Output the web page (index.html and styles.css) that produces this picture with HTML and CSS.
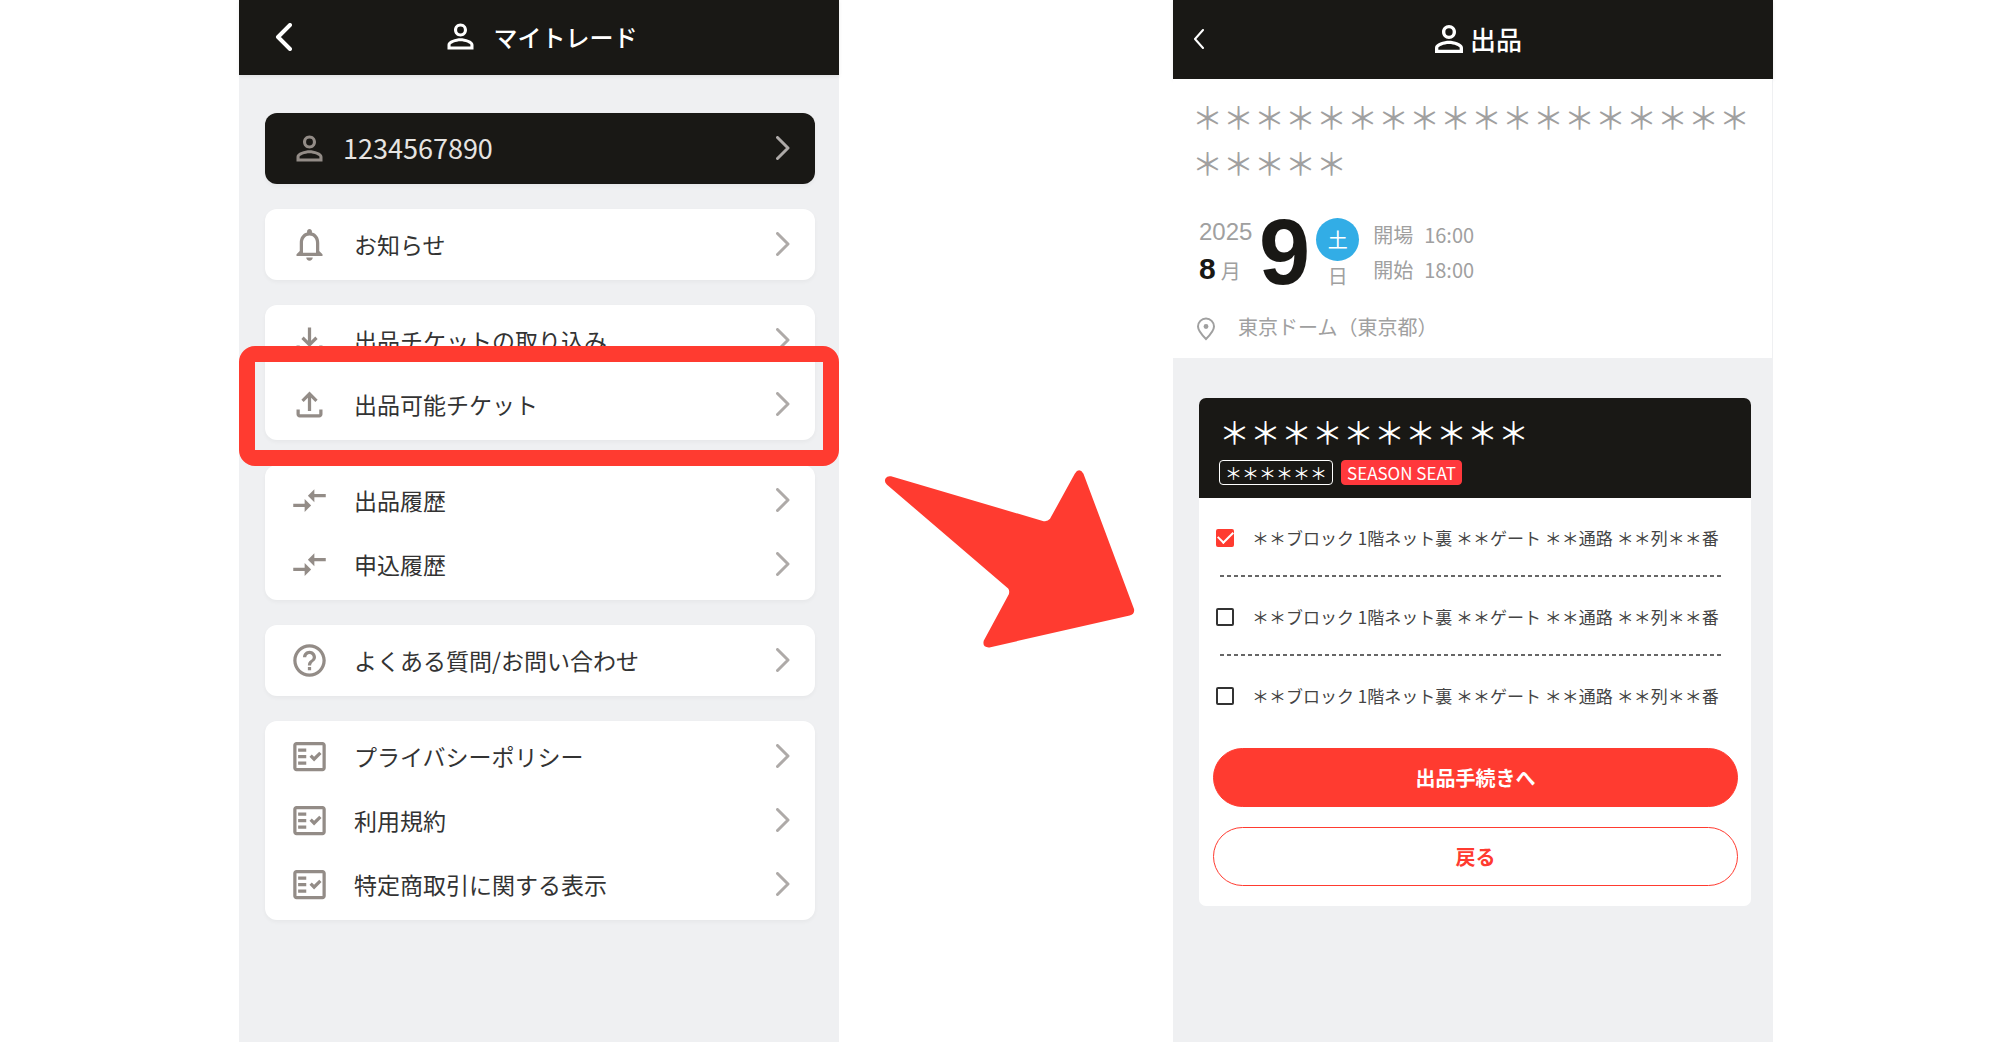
FILE: index.html
```html
<!DOCTYPE html>
<html lang="ja">
<head>
<meta charset="utf-8">
<meta name="viewport" content="width=device-width, initial-scale=1">
<title>マイトレード 出品手順</title>
<link rel="stylesheet" href="styles.css">
</head>
<body>
<svg class="sprite" aria-hidden="true">
  <symbol id="person" viewBox="0 0 24 24"><path d="M12 5.9a2.1 2.1 0 1 1 0 4.2 2.1 2.1 0 0 1 0-4.2m0 9c2.97 0 6.1 1.46 6.1 2.1v1.1H5.9V17c0-.64 3.13-2.1 6.1-2.1M12 4C9.79 4 8 5.79 8 8s1.79 4 4 4 4-1.79 4-4-1.790-4-4-4m0 9c-2.670 0-8 1.340-8 4v3h16v-3c0-2.660-5.330-4-8-4"/></symbol>
  <symbol id="bell" viewBox="0 0 24 24"><path d="M12 22c1.100 0 2-.9 2-2h-4c0 1.100.9 2 2 2m6-6v-5c0-3.070-1.630-5.640-4.500-6.320V4c0-.83-.67-1.500-1.500-1.500s-1.500.67-1.500 1.500v.68C7.640 5.360 6 7.920 6 11v5l-2 2v1h16v-1zm-2 1H8v-6c0-2.480 1.510-4.500 4-4.500s4 2.020 4 4.500z"/></symbol>
  <symbol id="download" viewBox="0 0 24 24"><path d="M12 16l-5-5 1.400-1.450 2.600 2.600V4h2v8.150l2.600-2.600L17 11zM6 20c-1.100 0-2-.9-2-2v-3h2v3h12v-3h2v3c0 1.100-.9 2-2 2z"/></symbol>
  <symbol id="upload" viewBox="0 0 24 24"><path d="M11 16V7.850l-2.600 2.600L7 9l5-5 5 5-1.400 1.450-2.600-2.600V16zM6 20c-1.100 0-2-.9-2-2v-3h2v3h12v-3h2v3c0 1.100-.9 2-2 2z"/></symbol>
  <symbol id="compare" viewBox="0 0 24 24"><path d="M9.010 14H2v2h7.010v3L13 15l-3.990-4zm5.980-1v-3H22V8h-7.010V5L11 9z"/></symbol>
  <symbol id="help" viewBox="0 0 24 24"><path d="M11 18h2v-2h-2zm1-16C6.480 2 2 6.480 2 12s4.480 10 10 10 10-4.480 10-10S17.520 2 12 2m0 18c-4.410 0-8-3.590-8-8s3.590-8 8-8 8 3.590 8 8-3.590 8-8 8m0-14c-2.210 0-4 1.790-4 4h2c0-1.100.9-2 2-2s2 .9 2 2c0 2-3 1.750-3 5h2c0-2.250 3-2.500 3-5 0-2.210-1.790-4-4-4"/></symbol>
  <symbol id="policy" viewBox="0 0 24 24"><path fill-rule="evenodd" d="M20 3H4c-1.100 0-2 .9-2 2v14c0 1.100.9 2 2 2h16c1.100 0 2-.9 2-2V5c0-1.100-.9-2-2-2m0 16H4V5h16z"/><path d="M19.410 10.420 17.990 9l-3.170 3.170-1.410-1.420L12 12.160 14.820 15zM5 7h5v2H5zM5 11h5v2H5zM5 15h5v2H5z"/></symbol>
  <symbol id="next" viewBox="0 0 14 24"><path d="M1.500 1.500 12 12 1.500 22.500" fill="none" stroke="currentColor" stroke-width="3" stroke-linecap="round" stroke-linejoin="round"/></symbol>
  <symbol id="pin" viewBox="0 0 20 24"><path d="M10 22C5 17 2 13.500 2 9.500a8 8 0 0 1 16 0C18 13.500 15 17 10 22z" fill="none" stroke="currentColor" stroke-width="2"/><circle cx="10" cy="9.500" r="2.400"/></symbol>
</svg>

<div class="guide">
  <section class="phone phone-menu">
    <header class="bar">
      <button class="back" type="button" aria-label="戻る">
        <svg width="17" height="28" viewBox="0 0 17 28"><path d="M15 2 3 14l12 12" fill="none" stroke="currentColor" stroke-width="4" stroke-linecap="round" stroke-linejoin="round"/></svg>
      </button>
      <h1 class="bar-title"><svg class="icon"><use href="#person"/></svg>マイトレード</h1>
    </header>
    <nav class="menu">
      <div class="group group-account">
        <a class="item" href="#"><svg class="icon"><use href="#person"/></svg><span>1234567890</span><svg class="chevron"><use href="#next"/></svg></a>
      </div>
      <div class="group">
        <a class="item" href="#"><svg class="icon"><use href="#bell"/></svg><span>お知らせ</span><svg class="chevron"><use href="#next"/></svg></a>
      </div>
      <div class="group">
        <a class="item" href="#"><svg class="icon"><use href="#download"/></svg><span>出品チケットの取り込み</span><svg class="chevron"><use href="#next"/></svg></a>
        <a class="item item-marked" href="#"><svg class="icon"><use href="#upload"/></svg><span>出品可能チケット</span><svg class="chevron"><use href="#next"/></svg></a>
      </div>
      <div class="group">
        <a class="item" href="#"><svg class="icon"><use href="#compare"/></svg><span>出品履歴</span><svg class="chevron"><use href="#next"/></svg></a>
        <a class="item" href="#"><svg class="icon"><use href="#compare"/></svg><span>申込履歴</span><svg class="chevron"><use href="#next"/></svg></a>
      </div>
      <div class="group">
        <a class="item" href="#"><svg class="icon"><use href="#help"/></svg><span>よくある質問/お問い合わせ</span><svg class="chevron"><use href="#next"/></svg></a>
      </div>
      <div class="group">
        <a class="item" href="#"><svg class="icon"><use href="#policy"/></svg><span>プライバシーポリシー</span><svg class="chevron"><use href="#next"/></svg></a>
        <a class="item" href="#"><svg class="icon"><use href="#policy"/></svg><span>利用規約</span><svg class="chevron"><use href="#next"/></svg></a>
        <a class="item" href="#"><svg class="icon"><use href="#policy"/></svg><span>特定商取引に関する表示</span><svg class="chevron"><use href="#next"/></svg></a>
      </div>
    </nav>
  </section>

  <div class="step">
    <svg class="arrow" viewBox="45 54 750 534" aria-hidden="true"><path d="M66 76 522 210Q534 212 541 203L615 68Q628 48 641 68L792 472Q795 488 779 492L360 587Q338 588 343 567L418 428Q421 418 416 411L54 101Q44 91 50 82Q55 74 66 76Z"/></svg>
  </div>

  <section class="phone phone-sell">
    <header class="bar">
      <button class="back" type="button" aria-label="戻る">
        <svg width="12" height="20" viewBox="0 0 12 20"><path d="M10 1 2 10l8 9" fill="none" stroke="currentColor" stroke-width="2" stroke-linecap="round" stroke-linejoin="round"/></svg>
      </button>
      <h1 class="bar-title"><svg class="icon"><use href="#person"/></svg>出品</h1>
    </header>
    <div class="event">
      <h2 class="event-name">＊＊＊＊＊＊＊＊＊＊＊＊＊＊＊＊＊＊＊＊＊＊＊</h2>
      <div class="date">
        <div class="year-month">
          <span class="year">2025</span>
          <span class="month"><b>8</b>月</span>
        </div>
        <strong class="day">9</strong>
        <div class="weekday"><span class="weekday-mark">土</span><span>日</span></div>
        <dl class="times">
          <dt>開場</dt><dd>16:00</dd>
          <dt>開始</dt><dd>18:00</dd>
        </dl>
      </div>
      <p class="place"><svg class="pin"><use href="#pin"/></svg>東京ドーム（東京都）</p>
    </div>
    <form class="ticket">
      <div class="ticket-head">
        <h3 class="ticket-name">＊＊＊＊＊＊＊＊＊＊</h3>
        <div class="tags"><span class="tag">＊＊＊＊＊＊</span><span class="tag tag-season">SEASON SEAT</span></div>
      </div>
      <div class="ticket-body">
        <label class="seat"><input type="checkbox" checked><span>＊＊ブロック 1階ネット裏 ＊＊ゲート ＊＊通路 ＊＊列＊＊番</span></label>
        <label class="seat"><input type="checkbox"><span>＊＊ブロック 1階ネット裏 ＊＊ゲート ＊＊通路 ＊＊列＊＊番</span></label>
        <label class="seat"><input type="checkbox"><span>＊＊ブロック 1階ネット裏 ＊＊ゲート ＊＊通路 ＊＊列＊＊番</span></label>
        <div class="actions">
          <button class="button button-primary" type="button">出品手続きへ</button>
          <button class="button" type="button">戻る</button>
        </div>
      </div>
    </form>
  </section>
</div>
</body>
</html>
```
FILE: styles.css
```css
:root {
  --ink: #191815;
  --panel: #eff0f2;
  --red: #ff3b30;
  --icon: #938c87;
  --muted: #a0a0a0;
}

* { box-sizing: border-box; }

body {
  margin: 0;
  background: #fff;
  color: #333;
  font-family: "Noto Sans CJK JP", "Liberation Sans", sans-serif;
}

h1, h2, h3, p, dl, dd { margin: 0; font-weight: 400; }

svg { display: block; flex: none; fill: currentColor; }

.sprite { position: absolute; width: 0; height: 0; }

.guide {
  display: grid;
  grid-template-columns: 239fr 600fr 334fr 600fr 227fr;
  min-height: 100vh;
}

.phone { background: var(--panel); }
.phone-menu { grid-column: 2; }
.step { grid-column: 3; display: flex; justify-content: center; align-items: flex-start; padding: 45vh 0 0 8px; }
.phone-sell { grid-column: 4; }
.arrow { width: 77%; color: var(--red); }

/* Title bars */
.bar {
  display: grid;
  grid-template-columns: 1fr auto 1fr;
  align-items: center;
  height: 75px;
  padding: 0 36px 2px;
  background: var(--ink);
  color: #fff;
  box-shadow: 0 1px 4px rgba(0, 0, 0, .08);
}

.back {
  justify-self: start;
  padding: 0;
  border: 0;
  background: none;
  color: inherit;
  cursor: pointer;
}

.bar-title {
  display: flex;
  align-items: center;
  gap: 14px;
  font-size: 24px;
  font-weight: 500;
  line-height: 36px;
}

.phone-sell .bar { height: 79px; padding: 0 20px 2px; }
.phone-sell .bar-title { gap: 0; padding-left: 4px; font-size: 26px; }

.icon { width: 39px; height: 39px; }
.phone-sell .icon { width: 42px; height: 42px; }

/* Menu */
.menu {
  display: flex;
  flex-direction: column;
  gap: 25px;
  padding: 38px 24px 38px 26px;
}

.group {
  padding: 4px 0 3px;
  border-radius: 12px;
  background: #fff;
  box-shadow: 0 2px 4px rgba(0, 0, 0, .04);
}

.item {
  position: relative;
  display: flex;
  align-items: center;
  gap: 25px;
  height: 64px;
  padding: 0 25px 2px;
  color: #333;
  font-size: 23px;
  line-height: 34px;
  text-decoration: none;
}

.item span { padding-bottom: 1px; }
.item .icon { color: var(--icon); }
.chevron { width: 14px; height: 24px; margin-left: auto; color: #aeaaa8; }

.group-account { background: var(--ink); }
.group-account .item { gap: 14px; color: #e6e4e2; font-size: 27px; }

.item-marked::after {
  content: "";
  position: absolute;
  z-index: 1;
  inset: -27px -24px -29px -26px;
  border: 16px solid var(--red);
  border-radius: 16px;
}

/* Event summary */
.event {
  padding: 14px 19px 14px;
  border-right: 1px solid var(--panel);
  background: #fff;
  color: var(--muted);
  font-size: 20px;
}

.event-name { font-size: 31px; line-height: 46px; word-break: break-all; }

.date {
  display: flex;
  align-items: flex-start;
  padding: 30px 0 0 7px;
}

.year-month { display: flex; flex-direction: column; width: 60px; }
.year { font: 24px/34px "Liberation Sans", sans-serif; }
.month { display: flex; align-items: baseline; gap: 5px; line-height: 40px; }
.month b { color: var(--ink); font: bold 30px/40px "Liberation Sans", sans-serif; }
.day { color: var(--ink); font: bold 92px/74px "Liberation Sans", sans-serif; }

.weekday {
  display: flex;
  flex-direction: column;
  align-items: center;
  padding: 3px 0 0 6px;
  line-height: 30px;
}

.weekday-mark {
  width: 43px;
  border-radius: 50%;
  background: #32ade6;
  color: #fff;
  line-height: 43px;
  text-align: center;
}

.times {
  display: grid;
  grid-template-columns: auto auto;
  column-gap: 11px;
  padding: 2px 0 0 14px;
  line-height: 35px;
}

.place { display: flex; align-items: center; gap: 22px; padding: 19px 0 0 4px; line-height: 34px; }
.pin { width: 20px; height: 24px; margin-top: 4px; }

/* Ticket */
.ticket {
  margin: 40px 22px 40px 26px;
  border-radius: 7px;
  background: #fff;
  overflow: hidden;
}

.ticket-head { height: 100px; padding: 10px 20px 0; background: var(--ink); color: #fff; }
.ticket-name { font-size: 31px; line-height: 46px; }
.tags { display: flex; gap: 8px; padding-top: 6px; }

.tag {
  padding: 0 5px;
  border: 1px solid #fff;
  border-radius: 4px;
  font-size: 17px;
  line-height: 23px;
}

.tag-season { border-color: #ff383c; background: #ff383c; }

.ticket-body { padding: 0 13px 20px 14px; }

.seat {
  display: flex;
  align-items: center;
  gap: 18px;
  height: 79px;
  padding-left: 3px;
  font-size: 17px;
  line-height: 26px;
  white-space: nowrap;
  color: #444;
}

.seat:has(+ .seat) {
  background: repeating-linear-gradient(90deg, #666 0 4px, transparent 4px 7px) 7px 77px / calc(100% - 24px) 2px no-repeat;
}

.seat input {
  display: grid;
  place-items: center;
  flex: none;
  width: 18px;
  height: 18px;
  margin: 0;
  border: 2px solid #333;
  border-radius: 2px;
  appearance: none;
}

.seat input:checked { border-color: var(--red); background: var(--red); }

.seat input:checked::after {
  content: "";
  width: 13px;
  height: 7px;
  border: solid #fff;
  border-width: 0 0 2px 2px;
  transform: translateY(-2px) rotate(-45deg);
}

.actions { display: flex; flex-direction: column; gap: 20px; padding-top: 13px; }

.button {
  height: 59px;
  border: 1px solid var(--red);
  border-radius: 30px;
  background: #fff;
  color: var(--red);
  font: bold 20px/30px "Noto Sans CJK JP", sans-serif;
  cursor: pointer;
}

.button-primary { background: var(--red); color: #fff; }
```
